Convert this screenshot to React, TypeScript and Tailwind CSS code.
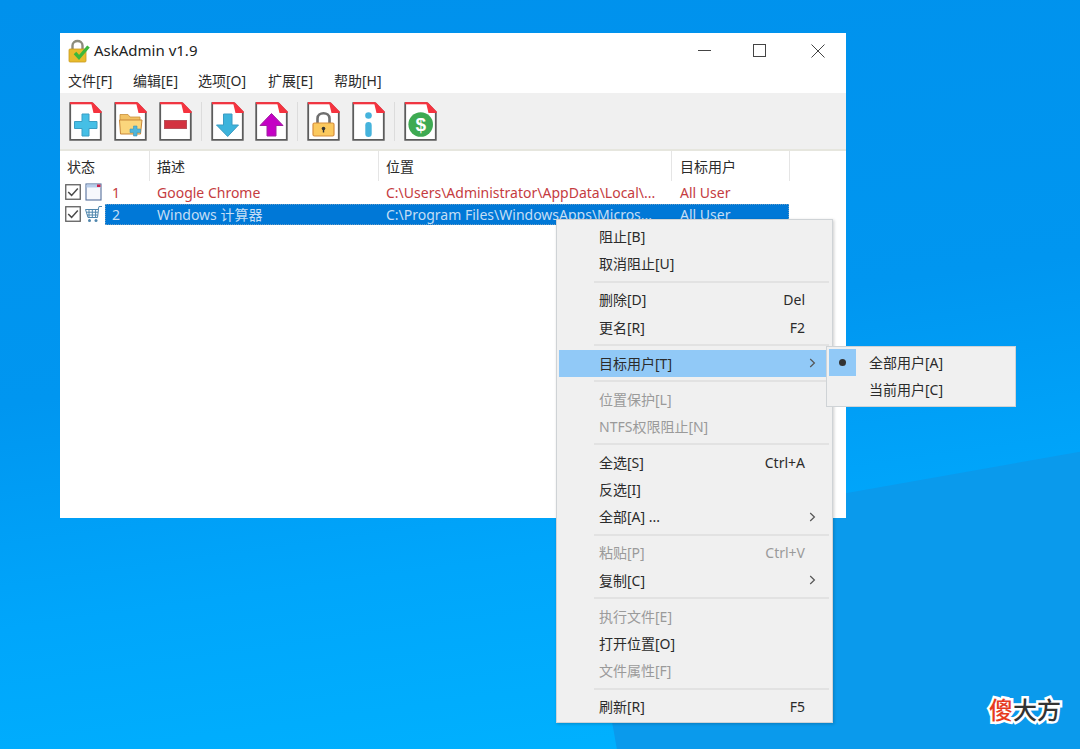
import type { ReactNode } from 'react'

const uiFont = "font-['Noto_Sans','Noto_Sans_CJK_SC',sans-serif]"

function DocIcon({ children }: { children?: ReactNode }) {
  return (
    <svg width="33" height="39" viewBox="0 0 33 39" className="shrink-0">
      <path d="M1.2 1.2H23L31.8 10V37.8H1.2Z" fill="#fff" stroke="#5c5c5c" strokeWidth="1.8" />
      <path d="M1 1.2H23" stroke="#f5333f" strokeWidth="2.2" />
      <path d="M22 0.4H24L32.6 9.5V11H24.5Z" fill="#f5333f" />
      {children}
    </svg>
  )
}

function PlusIcon() {
  return (
    <DocIcon>
      <path d="M13 12H20V19.5H28V26.5H20V34H13V26.5H5.5V19.5H13Z" fill="#45bfe6" stroke="#3a9ec4" strokeWidth="1" />
    </DocIcon>
  )
}

function FolderIcon() {
  return (
    <DocIcon>
      <path d="M6 12.5H14L16 15H26V19H6Z" fill="#f2c265" stroke="#c98f3a" strokeWidth="0.8" />
      <path d="M5.5 18H28L26.5 32H6.5Z" fill="#fbd67c" stroke="#c8873a" strokeWidth="1" />
      <path d="M19.5 24H23V27H26.5V30.5H23V34H19.5V30.5H16V27H19.5Z" fill="#4fb6db" stroke="#3f93b5" strokeWidth="0.6" />
    </DocIcon>
  )
}

function MinusIcon() {
  return (
    <DocIcon>
      <rect x="5.5" y="18.5" width="22" height="8" fill="#d33240" stroke="#b8505a" strokeWidth="1" />
    </DocIcon>
  )
}

function DownIcon() {
  return (
    <DocIcon>
      <path d="M12.5 12H21V23H27.5L16.7 34.5L5.5 23H12.5Z" fill="#3db4dc" stroke="#3a9bc2" strokeWidth="1" />
    </DocIcon>
  )
}

function UpIcon() {
  return (
    <DocIcon>
      <path d="M16.5 11.5L28 23.5H21V34H12V23.5H5Z" fill="#c400c4" stroke="#a020a0" strokeWidth="1" />
    </DocIcon>
  )
}

function LockIcon() {
  return (
    <DocIcon>
      <path d="M10.5 22V16.5C10.5 9.5 22.5 9.5 22.5 16.5V22" fill="none" stroke="#6f6f6f" strokeWidth="2.6" />
      <rect x="6" y="21" width="21" height="13" rx="1.5" fill="#fbc95e" stroke="#d88f3c" strokeWidth="1.2" />
      <circle cx="16.5" cy="26.5" r="1.8" fill="#333" />
      <rect x="15.8" y="27" width="1.4" height="3.5" fill="#333" />
    </DocIcon>
  )
}

function InfoIcon() {
  return (
    <DocIcon>
      <circle cx="16.5" cy="13.5" r="3.3" fill="#45b3dc" />
      <rect x="13.3" y="20" width="6.4" height="15" rx="3.2" fill="#45b3dc" />
    </DocIcon>
  )
}

function DollarIcon() {
  return (
    <DocIcon>
      <circle cx="16.7" cy="22.5" r="12.3" fill="#3eaa52" />
      <text x="16.7" y="29" textAnchor="middle" fontSize="19" fontWeight="700" fill="#fff" fontFamily="Liberation Sans, sans-serif">$</text>
    </DocIcon>
  )
}

function AppIcon() {
  return (
    <svg width="24" height="24" viewBox="0 0 24 24" className="shrink-0">
      <path d="M4.5 11V6.5C4.5 0.5 14.5 0.5 14.5 6.5V11" fill="none" stroke="#8c8c7c" strokeWidth="2.4" />
      <rect x="1" y="10" width="17" height="13" rx="1" fill="#e8bb2c" stroke="#c99a20" strokeWidth="0.8" />
      <path d="M7 14L11 18.5L20.5 7.5" fill="none" stroke="#3cb83c" strokeWidth="3.4" />
    </svg>
  )
}

function CheckBox() {
  return (
    <svg width="16" height="16" viewBox="0 0 16 16" className="shrink-0">
      <rect x="0.75" y="0.75" width="14.5" height="14.5" fill="#fff" stroke="#5f5f5f" strokeWidth="1.3" />
      <path d="M3.2 8L6.6 11.4L12.8 4.4" fill="none" stroke="#4a4a4a" strokeWidth="1.5" />
    </svg>
  )
}

function WindowRowIcon() {
  return (
    <svg width="17" height="18" viewBox="0 0 17 18" className="shrink-0">
      <rect x="1" y="1" width="15" height="16" fill="#f6f8fc" stroke="#56709c" strokeWidth="1.1" />
      <rect x="1.5" y="1.5" width="14" height="3" fill="#b8cdea" />
      <rect x="12" y="1.5" width="3.5" height="2.5" fill="#c8204a" />
    </svg>
  )
}

function CartIcon() {
  return (
    <svg width="17" height="18" viewBox="0 0 17 18" className="shrink-0">
      <path d="M0.5 4.5H13.5L12.5 12.5H3Z M4 4.5V12.5 M7.3 4.5V12.5 M10.6 4.5V12.5 M1.2 7.2H13 M2 10H12.7" fill="none" stroke="#4f86ad" strokeWidth="1" />
      <path d="M13 5L14 1.5H17" fill="none" stroke="#4f86ad" strokeWidth="1" />
      <circle cx="4.5" cy="15.5" r="1.5" fill="#4f86ad" />
      <circle cx="11" cy="15.5" r="1.5" fill="#4f86ad" />
    </svg>
  )
}

function ToolSep() {
  return <div className="w-[19px] h-[39px] flex justify-center shrink-0"><div className="w-px h-full bg-[#dcdcdc]" /></div>
}

function Chevron() {
  return (
    <svg width="7" height="10" viewBox="0 0 7 10">
      <path d="M1.2 1L5.4 5L1.2 9" fill="none" stroke="#555" strokeWidth="1.2" />
    </svg>
  )
}

type MenuEntry =
  | { sep: true }
  | { label: string; key?: string; disabled?: boolean; arrow?: boolean; active?: boolean; sep?: false }

const contextMenu: MenuEntry[] = [
  { label: '阻止[B]' },
  { label: '取消阻止[U]' },
  { sep: true },
  { label: '删除[D]', key: 'Del' },
  { label: '更名[R]', key: 'F2' },
  { sep: true },
  { label: '目标用户[T]', arrow: true, active: true },
  { sep: true },
  { label: '位置保护[L]', disabled: true },
  { label: 'NTFS权限阻止[N]', disabled: true },
  { sep: true },
  { label: '全选[S]', key: 'Ctrl+A' },
  { label: '反选[I]' },
  { label: '全部[A] ...', arrow: true },
  { sep: true },
  { label: '粘贴[P]', key: 'Ctrl+V', disabled: true },
  { label: '复制[C]', arrow: true },
  { sep: true },
  { label: '执行文件[E]', disabled: true },
  { label: '打开位置[O]' },
  { label: '文件属性[F]', disabled: true },
  { sep: true },
  { label: '刷新[R]', key: 'F5' }
]

function ContextMenu() {
  return (
    <div className="absolute left-[556px] top-[219px] w-[277px] h-[504px] bg-[#f0f0f0] border border-[#cfd3d6] pt-[3px] px-[2px] text-[14px] text-[#2b2b2b] shadow-[1px_1px_3px_rgba(0,0,0,0.2)]">
      {contextMenu.map((item, i) =>
        item.sep ? (
          <div key={i} className="h-[8.9px] flex items-center pl-[35px] pr-[1px]">
            <div className="h-[2px] w-full bg-[#e2e2e2]" />
          </div>
        ) : (
          <div
            key={i}
            className={`h-[27.2px] flex items-center pl-[40px] pr-[14px] ${item.active ? 'bg-[#91c9f7]' : ''} ${item.disabled ? 'text-[#9a9a9a]' : ''}`}
          >
            <span className="flex-1">{item.label}</span>
            {item.key && <span className="pr-[11px]">{item.key}</span>}
            {item.arrow && <Chevron />}
          </div>
        )
      )}
    </div>
  )
}

function SubMenu() {
  return (
    <div className="absolute left-[826px] top-[346px] w-[190px] h-[61px] bg-[#f0f0f0] border border-[#cfd3d6] py-[2px] pl-[2px] text-[14px] text-[#2b2b2b]">
      <div className="h-[27.2px] flex items-center">
        <div className="w-[27px] h-full bg-[#91c9f7] flex items-center justify-center">
          <div className="w-[7px] h-[7px] rounded-full bg-[#333]" />
        </div>
        <span className="pl-[13px]">全部用户[A]</span>
      </div>
      <div className="h-[27.2px] flex items-center pl-[40px]">当前用户[C]</div>
    </div>
  )
}

function AppWindow() {
  return (
    <div className="absolute left-[60px] top-[33px] w-[786px] h-[485px] bg-white flex flex-col text-[14px] text-[#2b2b2b]">
      {/* Title bar */}
      <div className="h-[35px] flex items-center pl-[8px] shrink-0">
        <AppIcon />
        <span className="ml-[2px] text-[15px] text-[#222]">AskAdmin v1.9</span>
        <div className="ml-auto flex items-center">
          <svg width="13" height="13" viewBox="0 0 13 13" className="mr-[42px]"><path d="M0 6.5H13" stroke="#444" strokeWidth="1" /></svg>
          <svg width="13" height="13" viewBox="0 0 13 13" className="mr-[45px]"><rect x="0.5" y="0.5" width="12" height="12" fill="none" stroke="#444" strokeWidth="1" /></svg>
          <svg width="14" height="14" viewBox="0 0 14 14" className="mr-[21px]"><path d="M0.5 0.5L13.5 13.5M13.5 0.5L0.5 13.5" stroke="#444" strokeWidth="1" /></svg>
        </div>
      </div>

      {/* Menu bar */}
      <div className="h-[25px] flex items-center shrink-0">
        <span className="ml-[8px] w-[65px]">文件[F]</span>
        <span className="w-[65px]">编辑[E]</span>
        <span className="w-[70px]">选项[O]</span>
        <span className="w-[66px]">扩展[E]</span>
        <span>帮助[H]</span>
      </div>

      {/* Toolbar */}
      <div className="h-[58px] bg-[#f0f0f0] border-b-[2px] border-[#e6e6de] flex items-center pl-[9px] shrink-0 gap-0">
        <PlusIcon />
        <div className="w-[12px]" />
        <FolderIcon />
        <div className="w-[12px]" />
        <MinusIcon />
        <ToolSep />
        <DownIcon />
        <div className="w-[11px]" />
        <UpIcon />
        <ToolSep />
        <LockIcon />
        <div className="w-[12px]" />
        <InfoIcon />
        <ToolSep />
        <DollarIcon />
      </div>

      {/* Column headers */}
      <div className="h-[30px] flex shrink-0">
        <div className="w-[90px] pl-[7px] flex items-center border-r border-[#e5e5e5]">状态</div>
        <div className="w-[229px] pl-[7px] flex items-center border-r border-[#e5e5e5]">描述</div>
        <div className="w-[293px] pl-[7px] flex items-center border-r border-[#e5e5e5]">位置</div>
        <div className="w-[118px] pl-[8px] flex items-center border-r border-[#e5e5e5]">目标用户</div>
      </div>

      {/* Rows */}
      <div className="h-[22px] flex items-center pl-[5px] text-[#c53c3f]">
        <CheckBox />
        <div className="w-[4px]" />
        <WindowRowIcon />
        <div className="w-[1px]" />
        <div className="w-[684px] flex items-center ml-[2px]">
          <span className="w-[45px] pl-[7px]">1</span>
          <span className="w-[229px] pl-[7px]">Google Chrome</span>
          <span className="w-[293px] pl-[7px] whitespace-nowrap">C:\Users\Administrator\AppData\Local\...</span>
          <span className="pl-[8px]">All User</span>
        </div>
      </div>
      <div className="h-[22px] flex items-center pl-[5px]">
        <CheckBox />
        <div className="w-[4px]" />
        <CartIcon />
        <div className="w-[1px]" />
        <div className="w-[684px] h-[21px] flex items-center ml-[2px] bg-[#0078d7] text-[#c4def5] outline-1 outline-dotted outline-[#6a9cc4] -outline-offset-1">
          <span className="w-[45px] pl-[7px]">2</span>
          <span className="w-[229px] pl-[7px]">Windows 计算器</span>
          <span className="w-[293px] pl-[7px] whitespace-nowrap">C:\Program Files\WindowsApps\Micros...</span>
          <span className="pl-[8px]">All User</span>
        </div>
      </div>
    </div>
  )
}

export default function App() {
  return (
    <div
      className={`relative w-[1080px] h-[749px] overflow-hidden ${uiFont} bg-[linear-gradient(172deg,#0091ec_0%,#0096f0_45%,#00a6fb_70%,#00b4ff_100%)]`}
    >
      <div className="absolute left-[580px] top-[540px] w-[700px] h-[300px] -rotate-[10deg] origin-top-left bg-[#0a9aec]" />
      <AppWindow />
      <ContextMenu />
      <SubMenu />
      <div className="absolute left-[989px] top-[693px] text-[24px] leading-[34px] font-medium tracking-[0px] [-webkit-text-stroke:5px_white] [paint-order:stroke_fill]">
        <span className="text-[#e63a1e]">傻</span>
        <span className="text-[#333]">大方</span>
      </div>
    </div>
  )
}
